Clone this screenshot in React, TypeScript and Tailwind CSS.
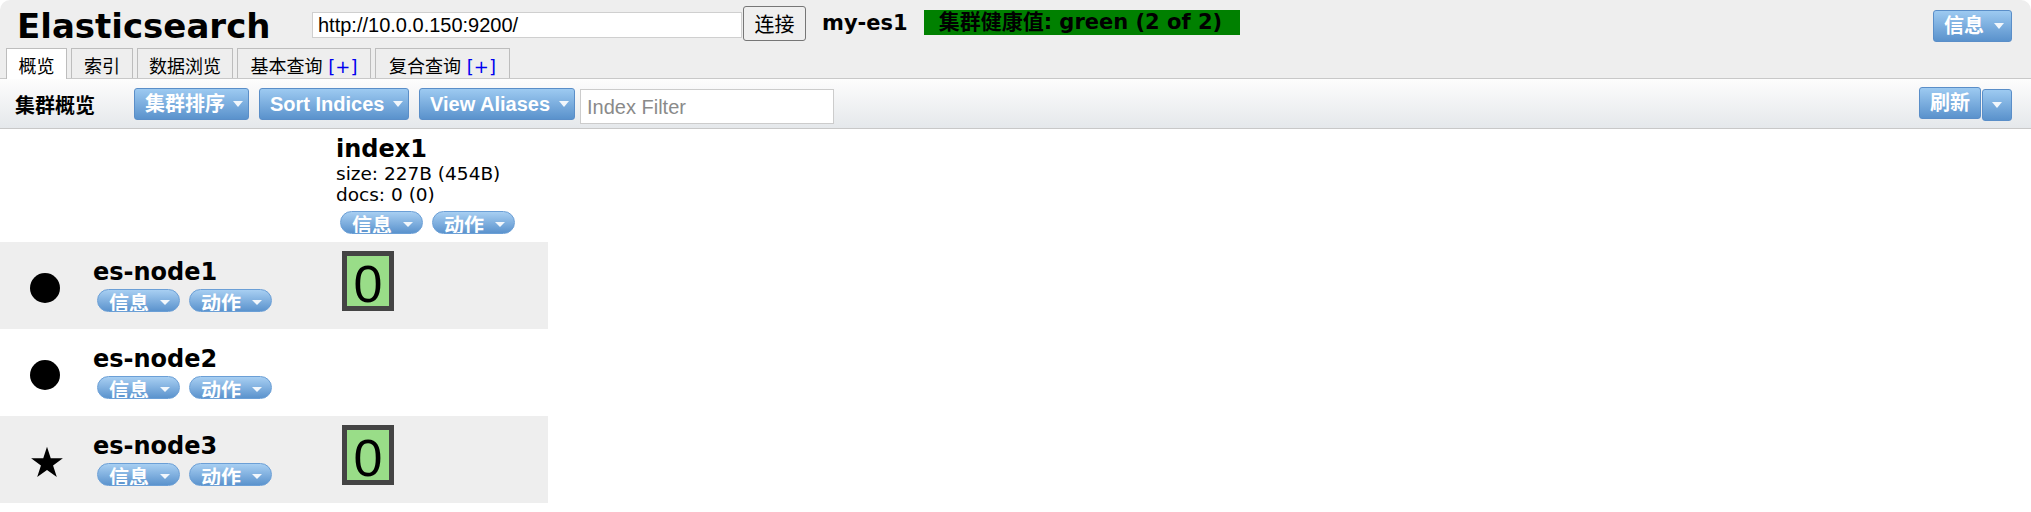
import React from "react";

function Caret({ className = "" }: { className?: string }) {
  return (
    <span
      className={
        "inline-block w-0 h-0 border-l-[5px] border-r-[5px] border-t-[6px] border-l-transparent border-r-transparent border-t-[#f2f7fc] " +
        className
      }
    />
  );
}

function BlueButton({ label, width }: { label: string; width: string }) {
  return (
    <div
      className={
        "flex items-center justify-between h-[32px] pl-[10px] pr-[5px] rounded-[3px] border border-[#5a8ec8] bg-linear-to-b from-[#9dcaf1] to-[#5a92cc] text-white font-bold text-[20px] whitespace-nowrap font-['Liberation_Sans','Noto_Sans_CJK_SC',sans-serif] " +
        width
      }
    >
      <span className="leading-[24px]">{label}</span>
      <Caret className="ml-[8px]" />
    </div>
  );
}

function Pill({ label, className = "" }: { label: string; className?: string }) {
  return (
    <div
      className={
        "flex items-start w-[83px] h-[23px] overflow-hidden rounded-full border border-[#6b9fd6] bg-linear-to-b from-[#a8cff2] to-[#5b93cd] pl-[11px] text-white font-bold text-[20px] leading-[29px] font-['DejaVu_Sans','Noto_Sans_CJK_SC',sans-serif] " +
        className
      }
    >
      <span>{label}</span>
      <span className="inline-block w-0 h-0 ml-[11px] mt-[10px] border-l-[5px] border-r-[5px] border-t-[5px] border-l-transparent border-r-transparent border-t-[#f2f7fc]" />
    </div>
  );
}

function Pills() {
  return (
    <div className="flex">
      <Pill label="信息" className="ml-[4px] mr-[5px]" />
      <Pill label="动作" className="ml-[4px]" />
    </div>
  );
}

function Shard() {
  return (
    <div className="w-[52px] h-[60px] border-[5px] border-[#444444] bg-[#99dd88] text-center text-[52px] leading-[56px] text-black font-['Liberation_Sans',sans-serif]">
      0
    </div>
  );
}

function Star() {
  return (
    <svg width="34" height="32" viewBox="0 0 24 23">
      <path
        d="M12 0.6 L14.69 8.89 L23.41 8.89 L16.36 14.02 L19.05 22.31 L12 17.18 L4.95 22.31 L7.64 14.02 L0.59 8.89 L9.31 8.89 Z"
        fill="black"
      />
    </svg>
  );
}

function NodeRow({
  name,
  icon,
  shard,
  gray,
}: {
  name: string;
  icon: "dot" | "star";
  shard: boolean;
  gray: boolean;
}) {
  return (
    <div className={"flex w-[548px] " + (gray ? "bg-[#eeeeee]" : "bg-white")}>
      <div className="w-[93px] flex items-center pl-[30px] pt-[5px]">
        {icon === "dot" ? (
          <div className="w-[30px] h-[30px] rounded-full bg-black" />
        ) : (
          <Star />
        )}
      </div>
      <div className="w-[243px] pt-[16px] pb-[17px]">
        <div className="text-[24px] leading-[28px] font-bold text-black">{name}</div>
        <div className="mt-[3px]">
          <Pills />
        </div>
      </div>
      <div className="w-[212px] pt-[9px] pl-[6px]">{shard ? <Shard /> : null}</div>
    </div>
  );
}

export default function App() {
  return (
    <div className="w-[2031px] h-[512px] bg-white text-black font-['DejaVu_Sans','Noto_Sans_CJK_SC',sans-serif] overflow-hidden">
      {/* Header */}
      <div className="bg-[#eeeeee] rounded-t-[10px] border-b border-[#c8c8c8]">
        <div className="flex items-start h-[48px]">
          <div className="w-[312px] pl-[17px] mt-[9px] text-[34px] leading-[34px] font-bold">
            Elasticsearch
          </div>
          <div className="mt-[12px] w-[430px] h-[26px] bg-white border border-[#cfcfcf] pl-[5px] text-[20px] leading-[24px] font-['Liberation_Sans',sans-serif] text-black">
            http://10.0.0.150:9200/
          </div>
          <div className="mt-[6px] ml-[1px] w-[63px] h-[35px] rounded-[3px] border border-[#767676] bg-[#efefef] flex items-center justify-center text-[20px] font-['Noto_Sans_CJK_SC',sans-serif]">
            连接
          </div>
          <div className="ml-[16px] mt-[11px] text-[21px] leading-[25px] font-bold">my-es1</div>
          <div className="ml-[16px] mt-[10px] w-[316px] h-[25px] bg-[#008000] pl-[15px] text-[21px] leading-[25px] font-bold text-black whitespace-nowrap">
            集群健康值: green (2 of 2)
          </div>
          <div className="ml-auto mr-[19px] mt-[10px] flex items-center h-[32px] pl-[10px] pr-[7px] rounded-[3px] border border-[#5a8ec8] bg-linear-to-b from-[#9dcaf1] to-[#5a92cc] text-white font-bold text-[20px]">
            <span className="leading-[24px]">信息</span>
            <Caret className="ml-[10px]" />
          </div>
        </div>
        <div className="flex items-end h-[30px] pl-[6px] gap-[4px] text-[18px]">
          <div className="relative w-[61px] h-[31px] -mb-px bg-white border border-b-0 border-[#bdbdbd] text-center pt-[7px] leading-[22px]">
            概览
          </div>
          <div className="w-[62px] h-[30px] border border-b-0 border-[#bdbdbd] text-center pt-[7px] leading-[22px]">
            索引
          </div>
          <div className="w-[96px] h-[30px] border border-b-0 border-[#bdbdbd] text-center pt-[7px] leading-[22px]">
            数据浏览
          </div>
          <div className="w-[134px] h-[30px] border border-b-0 border-[#bdbdbd] text-center pt-[7px] leading-[22px] whitespace-nowrap">
            基本查询 <span className="text-[#0000ee]">[+]</span>
          </div>
          <div className="w-[135px] h-[30px] border border-b-0 border-[#bdbdbd] text-center pt-[7px] leading-[22px] whitespace-nowrap">
            复合查询 <span className="text-[#0000ee]">[+]</span>
          </div>
        </div>
      </div>

      {/* Toolbar */}
      <div className="flex items-start h-[50px] border-b border-[#c8c8c8] bg-linear-to-b from-[#fdfdfd] to-[#e5e8eb]">
        <div className="w-[134px] pl-[15px] mt-[15px] text-[20px] leading-[24px] font-bold">集群概览</div>
        <div className="mt-[9px] flex items-start">
          <BlueButton label="集群排序" width="w-[115px]" />
          <div className="ml-[10px]">
            <BlueButton label="Sort Indices" width="w-[150px]" />
          </div>
          <div className="ml-[10px]">
            <BlueButton label="View Aliases" width="w-[156px]" />
          </div>
          <div className="ml-[5px] mt-[1px] w-[254px] h-[35px] bg-white border border-[#cccccc] pl-[6px] flex items-center text-[20px] text-[#8a8a8a] font-['Liberation_Sans',sans-serif]">
            Index Filter
          </div>
        </div>
        <div className="ml-auto mr-[19px] mt-[8px] flex items-start">
          <div className="flex items-center h-[32px] px-[10px] rounded-[3px] border border-[#5a8ec8] bg-linear-to-b from-[#9dcaf1] to-[#5a92cc] text-white font-bold text-[20px]">
            <span className="leading-[24px]">刷新</span>
          </div>
          <div className="mt-[2px] ml-[1px] flex items-center justify-center w-[30px] h-[32px] rounded-[3px] border border-[#5a8ec8] bg-linear-to-b from-[#9dcaf1] to-[#5a92cc]">
            <Caret />
          </div>
        </div>
      </div>

      {/* Cluster overview */}
      <div className="w-[548px]">
        <div className="flex pb-[8px]">
          <div className="w-[336px]" />
          <div className="w-[212px] pt-[6px]">
            <div className="text-[24px] leading-[28px] font-bold">index1</div>
            <div className="text-[18.5px] leading-[21px]">size: 227B (454B)</div>
            <div className="text-[18.5px] leading-[21px]">docs: 0 (0)</div>
            <div className="mt-[6px]">
              <Pills />
            </div>
          </div>
        </div>
        <NodeRow name="es-node1" icon="dot" shard gray />
        <NodeRow name="es-node2" icon="dot" shard={false} gray={false} />
        <NodeRow name="es-node3" icon="star" shard gray />
      </div>
    </div>
  );
}
